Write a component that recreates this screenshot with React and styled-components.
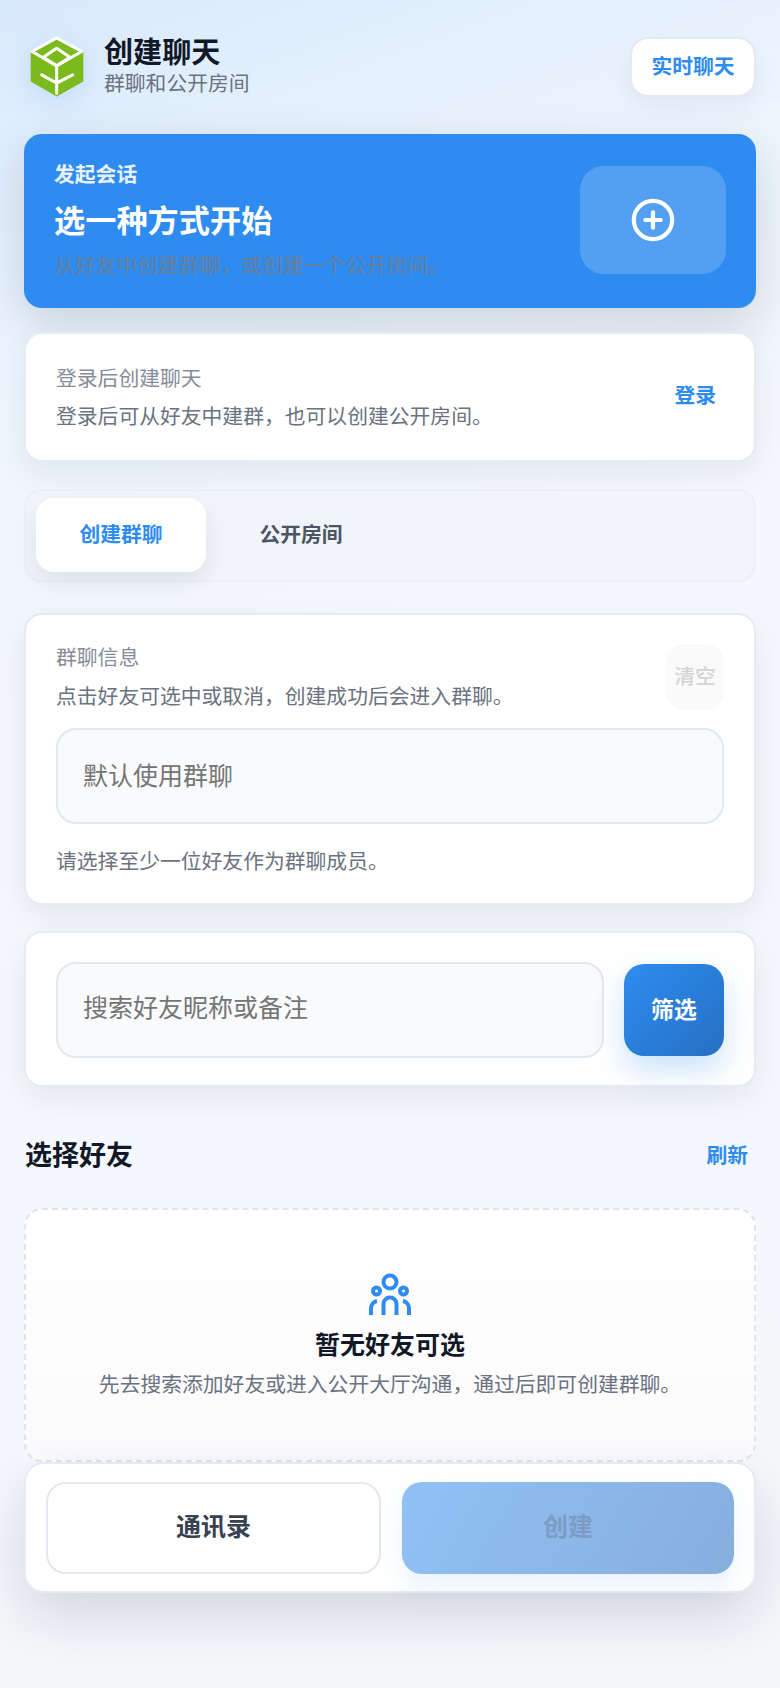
import React from 'react';
import styled, { createGlobalStyle } from 'styled-components';
import { CirclePlus } from 'lucide-react';

const Global = createGlobalStyle`
  * { box-sizing: border-box; }
  html, body { margin: 0; padding: 0; }
  body {
    font-family: "Noto Sans CJK SC", "Noto Sans", sans-serif;
    background: #f5f7fb;
  }
`;

const Page = styled.div`
  position: relative;
  width: 780px;
  height: 1688px;
  overflow: hidden;
  padding: 37px 24px 0;
  background: linear-gradient(160deg, #d8e9fb 0%, #ecf5ff 18%, #f4f7fc 38%, #f5f7fb 100%);
`;

const Header = styled.header`
  display: flex;
  align-items: center;
  justify-content: space-between;
  height: 60px;
`;
const Brand = styled.div`
  display: flex;
  align-items: center;
  gap: 20px;
  padding-left: 6px;
`;
const BrandText = styled.div`
  display: flex;
  flex-direction: column;
  padding-bottom: 6px;
`;
const AppTitle = styled.div`
  font-size: 29.12px;
  line-height: 36px;
  font-weight: 700;
  color: #111827;
`;
const AppSub = styled.div`
  font-size: 20.8px;
  line-height: 28px;
  color: #6b7280;
`;
const GhostButton = styled.button`
  width: 126px;
  height: 60px;
  padding: 0 0 4px;
  border: 2px solid #e5e9f2;
  border-radius: 18px;
  background: #fff;
  color: #2e8cf0;
  font: 700 20.8px "Noto Sans CJK SC", sans-serif;
  box-shadow: 0 10px 24px rgba(15, 23, 42, 0.06);
`;

const Hero = styled.section`
  margin-top: 37px;
  height: 174px;
  border-radius: 18px;
  background: #2e8cf0;
  padding: 0 30px;
  display: flex;
  align-items: center;
  justify-content: space-between;
  box-shadow: 0 16px 48px rgba(15, 23, 42, 0.16);
`;
const HeroText = styled.div`
  display: flex;
  flex-direction: column;
  padding-bottom: 6px;
`;
const HeroLabel = styled.div`
  font-size: 20.8px;
  line-height: 28px;
  font-weight: 600;
  color: #e8f2ff;
`;
const HeroTitle = styled.div`
  font-size: 31.2px;
  line-height: 42px;
  font-weight: 700;
  color: #fff;
  margin-top: 11px;
`;
const HeroDesc = styled.div`
  font-size: 20.8px;
  line-height: 28px;
  color: #6b7f99;
  margin-top: 10px;
`;
const HeroIcon = styled.div`
  width: 146px;
  height: 108px;
  margin-bottom: 2px;
  border-radius: 24px;
  background: rgba(255, 255, 255, 0.18);
  display: flex;
  align-items: center;
  justify-content: center;
  color: #fff;
`;

const Card = styled.section`
  margin-top: ${p => p.$top || 26}px;
  border: 2px solid #e6ebf3;
  border-radius: 18px;
  background: #fff;
  box-shadow: 0 12px 32px rgba(15, 23, 42, 0.065);
`;
const LoginCard = styled(Card)`
  height: 130px;
  padding: 0 30px 3px;
  display: flex;
  align-items: center;
  justify-content: space-between;
`;
const TextBlock = styled.div`
  display: flex;
  flex-direction: column;
  gap: 10px;
`;
const CardLabel = styled.div`
  font-size: 20.8px;
  line-height: 28px;
  color: #868c9a;
`;
const CardDesc = styled.div`
  font-size: 20.8px;
  line-height: 28px;
  color: #6b7280;
`;
const LinkButton = styled.button`
  border: 0;
  background: none;
  padding: 0 8px 3px 0;
  color: #2e8cf0;
  font: 700 20.8px "Noto Sans CJK SC", sans-serif;
`;

const Tabs = styled.nav`
  margin-top: 27px;
  height: 93px;
  padding: 7px 10px;
  border: 2px solid #eceff5;
  border-radius: 18px;
  background: #f1f4f9;
  display: flex;
  gap: 10px;
`;
const Tab = styled.button`
  width: 170px;
  height: 74px;
  padding: 0 0 4px;
  border: 0;
  border-radius: 18px;
  background: ${p => (p.$active ? '#fff' : 'transparent')};
  color: ${p => (p.$active ? '#2e8cf0' : '#4b5563')};
  font: 700 20.8px "Noto Sans CJK SC", sans-serif;
  box-shadow: ${p => (p.$active ? '0 10px 24px rgba(15,23,42,0.08)' : 'none')};
`;

const GroupCard = styled(Card)`
  height: 292px;
  padding: 29px 30px 0;
`;
const GroupHead = styled.div`
  display: flex;
  justify-content: space-between;
  align-items: flex-start;
  height: 66px;
`;
const GroupText = styled(TextBlock)`
  margin-top: -2px;
  gap: 11px;
`;
const ClearButton = styled.button`
  width: 58px;
  height: 66px;
  border: 0;
  border-radius: 18px;
  background: #fafafa;
  color: #d4d4d4;
  font: 500 20.8px "Noto Sans CJK SC", sans-serif;
  padding: 0 0 4px;
`;
const Field = styled.input`
  display: block;
  height: 96px;
  width: 100%;
  border: 2px solid #e2e8f0;
  border-radius: 20px;
  background: #f8fafc;
  padding: 0 25px ${p => p.$lift || 0}px;
  font: 400 25px "Noto Sans CJK SC", sans-serif;
  outline: none;
  &::placeholder { color: #757575; opacity: 1; }
`;
const GroupField = styled(Field)`
  margin-top: 18px;
`;
const Help = styled(CardDesc)`
  margin-top: 22px;
`;

const SearchCard = styled(Card)`
  height: 156px;
  padding: 29px 30px 0;
  display: flex;
  align-items: flex-start;
  gap: 20px;
`;
const FilterButton = styled.button`
  width: 100px;
  height: 92px;
  margin-top: 2px;
  flex: none;
  padding: 0 0 4px;
  border: 0;
  border-radius: 20px;
  background: linear-gradient(135deg, #2e8cf0, #2570c2);
  color: #fff;
  font: 700 22.88px "Noto Sans CJK SC", sans-serif;
  box-shadow: 0 14px 30px rgba(46, 140, 240, 0.25);
`;

const SectionHead = styled.div`
  height: 40px;
  margin-top: 47px;
  display: flex;
  align-items: center;
  justify-content: space-between;
  padding-left: 1px;
`;
const SectionTitle = styled.h2`
  margin: 0;
  font-size: 27px;
  line-height: 40px;
  font-weight: 700;
  color: #111827;
`;
const RefreshLink = styled(LinkButton)`
  padding: 0;
  margin-right: 8px;
`;

const Empty = styled.section`
  margin-top: 34px;
  height: 254px;
  border: 2px dashed #dfe4ee;
  border-radius: 18px;
  background: linear-gradient(180deg, #ffffff, #fbfbfd);
  padding-top: 63px;
  display: flex;
  flex-direction: column;
  align-items: center;
`;
const EmptyTitle = styled.div`
  margin-top: 9px;
  font-size: 25px;
  line-height: 38px;
  font-weight: 700;
  color: #111827;
`;
const EmptyDesc = styled(CardDesc)`
  margin-top: 7px;
`;

const BottomBar = styled.div`
  position: absolute;
  left: 24px;
  right: 24px;
  bottom: 95px;
  height: 131px;
  padding: 18px 20px;
  border: 2px solid #e6ebf3;
  border-radius: 20px;
  background: #fff;
  display: grid;
  grid-template-columns: 335px 1fr;
  gap: 21px;
  box-shadow: 0 24px 56px rgba(15, 23, 42, 0.14);
`;
const OutlineAction = styled.button`
  height: 92px;
  padding: 0 0 6px;
  border: 2px solid #e3e8f2;
  border-radius: 20px;
  background: #fff;
  color: #374151;
  font: 700 25px "Noto Sans CJK SC", sans-serif;
`;
const PrimaryAction = styled.button`
  height: 92px;
  padding: 0 0 6px;
  border: 0;
  border-radius: 20px;
  background: linear-gradient(120deg, #90c1f7, #86aedd);
  color: #7d9cc4;
  font: 700 25px "Noto Sans CJK SC", sans-serif;
  box-shadow: 0 12px 28px rgba(46, 140, 240, 0.1);
`;

const LogoMark = styled.svg`
  filter: drop-shadow(0 8px 14px rgba(46, 140, 240, 0.16));
`;

const Logo = () => (
  <LogoMark width="54" height="62" viewBox="90 110 162 183" fill="none">
    <path d="M170 112 250 155V245L170 290 92 245V155Z" fill="#7aba1c" />
    <g stroke="#fff" strokeWidth="9" strokeLinecap="round" strokeLinejoin="round">
      <path d="M170 114 245 155 170 198 96 155Z" />
      <path d="M170 145 210 172 170 198 130 172Z" />
      <path d="M170 198V280M170 250 125 225M170 250 218 225" />
    </g>
  </LogoMark>
);

const PeopleIcon = () => (
  <svg width="42" height="42" viewBox="0 0 42 42" fill="none" stroke="#2e8cf0" strokeWidth="4">
    <circle cx="21" cy="9" r="6.5" />
    <circle cx="7.5" cy="18" r="3.5" />
    <circle cx="34.5" cy="18" r="3.5" />
    <path d="M14.5 42V31a6.5 6.5 0 0 1 13 0V42" />
    <path d="M2 42V35a7.5 7.5 0 0 1 6-7" />
    <path d="M40 42V35a7.5 7.5 0 0 0-6-7" />
  </svg>
);

export default function App() {
  return (
    <Page>
      <Global />
      <Header>
        <Brand>
          <Logo />
          <BrandText>
            <AppTitle>创建聊天</AppTitle>
            <AppSub>群聊和公开房间</AppSub>
          </BrandText>
        </Brand>
        <GhostButton>实时聊天</GhostButton>
      </Header>

      <Hero>
        <HeroText>
          <HeroLabel>发起会话</HeroLabel>
          <HeroTitle>选一种方式开始</HeroTitle>
          <HeroDesc>从好友中创建群聊，或创建一个公开房间。</HeroDesc>
        </HeroText>
        <HeroIcon><CirclePlus size={46} strokeWidth={2.2} /></HeroIcon>
      </Hero>

      <LoginCard $top={24}>
        <TextBlock>
          <CardLabel>登录后创建聊天</CardLabel>
          <CardDesc>登录后可从好友中建群，也可以创建公开房间。</CardDesc>
        </TextBlock>
        <LinkButton>登录</LinkButton>
      </LoginCard>

      <Tabs>
        <Tab $active>创建群聊</Tab>
        <Tab>公开房间</Tab>
      </Tabs>

      <GroupCard $top={31}>
        <GroupHead>
          <GroupText>
            <CardLabel>群聊信息</CardLabel>
            <CardDesc>点击好友可选中或取消，创建成功后会进入群聊。</CardDesc>
          </GroupText>
          <ClearButton>清空</ClearButton>
        </GroupHead>
        <GroupField $lift={4} placeholder="默认使用群聊" />
        <Help>请选择至少一位好友作为群聊成员。</Help>
      </GroupCard>

      <SearchCard>
        <Field $lift={8} placeholder="搜索好友昵称或备注" />
        <FilterButton>筛选</FilterButton>
      </SearchCard>

      <SectionHead>
        <SectionTitle>选择好友</SectionTitle>
        <RefreshLink>刷新</RefreshLink>
      </SectionHead>

      <Empty>
        <PeopleIcon />
        <EmptyTitle>暂无好友可选</EmptyTitle>
        <EmptyDesc>先去搜索添加好友或进入公开大厅沟通，通过后即可创建群聊。</EmptyDesc>
      </Empty>

      <BottomBar>
        <OutlineAction>通讯录</OutlineAction>
        <PrimaryAction>创建</PrimaryAction>
      </BottomBar>
    </Page>
  );
}
